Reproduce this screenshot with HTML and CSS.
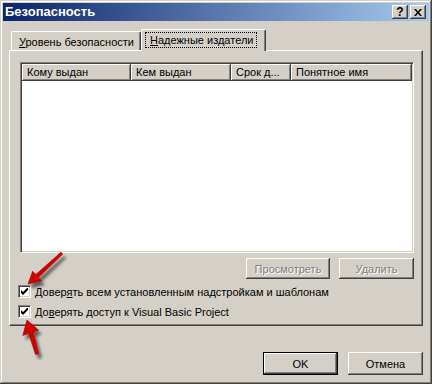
FILE: index.html
```html
<!DOCTYPE html>
<html lang="ru">
<head>
    <meta charset="UTF-8">
    <title>Безопасность</title>
    <link rel="stylesheet" href="styles.css">
</head>
<body>
    <div class="window">
        <div class="titlebar">
            <span class="title">Безопасность</span>
            <div class="caption-btns">
                <div class="cap-btn help">?</div>
                <div class="cap-btn close">
                    <svg width="8" height="7" viewBox="0 0 8 7"><path d="M0 0h2l2 2.5L6 0h2L5 3.5 8 7H6L4 4.5 2 7H0l3-3.5z" fill="#000"/></svg>
                </div>
            </div>
        </div>

        <div class="client">
            <div class="tabs">
                <div class="tab"><u>У</u>ровень безопасности</div>
                <div class="tab active"><span class="focus"><u>Н</u>адежные издатели</span></div>
            </div>

            <div class="panel">
                <div class="list">
                    <div class="list-head">
                        <div class="col c1">Кому выдан</div>
                        <div class="col c2">Кем выдан</div>
                        <div class="col c3">Срок д...</div>
                        <div class="col c4">Понятное имя</div>
                    </div>
                    <div class="list-body"></div>
                </div>

                <div class="panel-btns">
                    <div class="btn disabled wide">Просмотреть</div>
                    <div class="btn disabled">Удалить</div>
                </div>

                <div class="check">
                    <span class="box">
                        <svg width="7" height="7" viewBox="0 0 7 7"><path d="M0 2v3l2 2 5-5V-1L2 4z" fill="#000"/></svg>
                    </span>
                    <span>Довер<u>я</u>ть всем установленным надстройкам и шаблонам</span>
                </div>
                <div class="check">
                    <span class="box">
                        <svg width="7" height="7" viewBox="0 0 7 7"><path d="M0 2v3l2 2 5-5V-1L2 4z" fill="#000"/></svg>
                    </span>
                    <span>До<u>в</u>ерять доступ к Visual Basic Project</span>
                </div>
            </div>

            <div class="dialog-btns">
                <div class="btn default">OK</div>
                <div class="btn">Отмена</div>
            </div>
        </div>

        <!-- red arrows pasted over the screenshot -->
        <svg class="arrows" width="432" height="384" viewBox="0 0 432 384">
            <defs>
                <filter id="shadow" x="-50%" y="-50%" width="200%" height="200%">
                    <feDropShadow dx="3" dy="4" stdDeviation="1.6" flood-color="#000" flood-opacity="0.55"/>
                </filter>
            </defs>
            <g filter="url(#shadow)" fill="#d40000" stroke="#9a0000" stroke-width="0.6" stroke-linejoin="round">
                <path d="M28 284 L41.5 280.8 L38.4 277.6 L62.8 254 L61 252.2 L35.8 274.6 L32.6 271.2 Z"/>
                <path d="M27 320 L38.5 330.2 L33 331.8 L38.6 353.8 L35.6 354.6 L28.6 333.3 L22.8 335.5 Z"/>
            </g>
        </svg>
    </div>
</body>
</html>
```

FILE: styles.css
```css
body {
    margin: 0;
    font-family: "Liberation Sans", Arial, sans-serif;
    font-size: 11px;
    color: #000;
    background: #d4d0c8;
}
.window {
    position: relative;
    width: 432px;
    height: 384px;
    box-sizing: border-box;
    padding: 3px;
    background: #d4d0c8;
    box-shadow: inset -1px -1px #404040, inset 1px 1px #d4d0c8, inset -2px -2px #808080, inset 2px 2px #fff;
}
.titlebar {
    height: 18px;
    display: flex;
    justify-content: space-between;
    background: linear-gradient(to right, #0a246a, #a6caf0);
}
.title {
    color: #fff;
    font-weight: bold;
    font-size: 13px;
    line-height: 18px;
    padding-left: 2px;
}
.caption-btns {
    display: flex;
    gap: 2px;
    padding: 2px 3px 0 0;
}
.cap-btn {
    width: 16px;
    height: 14px;
    box-sizing: border-box;
    background: #d4d0c8;
    box-shadow: inset -1px -1px #404040, inset 1px 1px #fff, inset -2px -2px #808080;
    display: flex;
    align-items: center;
    justify-content: center;
    font-weight: bold;
    font-size: 12px;
    line-height: 14px;
}
.cap-btn svg {
    display: block;
    margin-left: -1px;
}
.client {
    padding: 0 6px;
}
.tabs {
    display: flex;
    align-items: flex-end;
    height: 21px;
    margin-top: 8px;
    padding-left: 2px;
}
.tab {
    box-sizing: border-box;
    height: 19px;
    width: 130px;
    padding: 4px 0 0 7px;
    border-top: 1px solid #fff;
    border-left: 1px solid #fff;
    border-right: 1px solid #404040;
    border-radius: 2px 2px 0 0;
    box-shadow: inset -1px 0 #808080;
    white-space: nowrap;
}
.tab.active {
    position: relative;
    z-index: 1;
    width: 125px;
    height: 22px;
    margin-bottom: -1px;
    padding: 3px 0 0 4px;
    background: #d4d0c8;
}
.focus {
    display: inline-block;
    padding: 1px 3px 1px 4px;
    outline: 1px dotted #000;
    line-height: 12px;
}
.panel {
    box-sizing: border-box;
    height: 276px;
    padding: 11px 8px 0 8px;
    border: 1px solid;
    border-color: #fff #404040 #404040 #fff;
    box-shadow: inset -1px -1px #808080;
}
.list {
    margin-left: 2px;
    height: 191px;
    box-sizing: border-box;
    border: 1px solid;
    border-color: #808080 #fff #fff #808080;
    box-shadow: inset 1px 1px #404040, inset -1px -1px #d4d0c8;
    padding: 1px;
    background: #fff;
    display: flex;
    flex-direction: column;
}
.list-head {
    display: flex;
    height: 17px;
}
.col {
    box-sizing: border-box;
    height: 17px;
    padding: 2px 0 0 5px;
    background: #d4d0c8;
    box-shadow: inset -1px -1px #404040, inset 1px 1px #fff, inset -2px -2px #808080;
    white-space: nowrap;
    overflow: hidden;
}
.c1 { width: 109px; }
.c2 { width: 100px; }
.c3 { width: 60px; }
.c4 { flex: 1; }
.panel-btns {
    display: flex;
    justify-content: flex-end;
    gap: 9px;
    margin-top: 5px;
}
.btn {
    box-sizing: border-box;
    width: 75px;
    height: 21px;
    background: #d4d0c8;
    box-shadow: inset -1px -1px #404040, inset 1px 1px #fff, inset -2px -2px #808080, inset 2px 2px #d4d0c8;
    display: flex;
    align-items: center;
    justify-content: center;
}
.btn.wide {
    width: 84px;
}
.btn.disabled {
    color: #808080;
    text-shadow: 1px 1px #fff;
}
.check {
    display: flex;
    align-items: center;
    gap: 4px;
    height: 13px;
    margin-top: 6px;
}
.check + .check {
    margin-top: 7px;
}
.box {
    box-sizing: border-box;
    width: 13px;
    height: 13px;
    background: #fff;
    border: 1px solid;
    border-color: #808080 #fff #fff #808080;
    box-shadow: inset 1px 1px #404040, inset -1px -1px #d4d0c8;
    display: flex;
    align-items: center;
    justify-content: center;
}
.dialog-btns {
    display: flex;
    justify-content: flex-end;
    gap: 10px;
    margin-top: 26px;
}
.dialog-btns .btn {
    height: 23px;
}
.btn.default {
    border: 1px solid #000;
}
.arrows {
    position: absolute;
    left: 0;
    top: 0;
    pointer-events: none;
}
```
